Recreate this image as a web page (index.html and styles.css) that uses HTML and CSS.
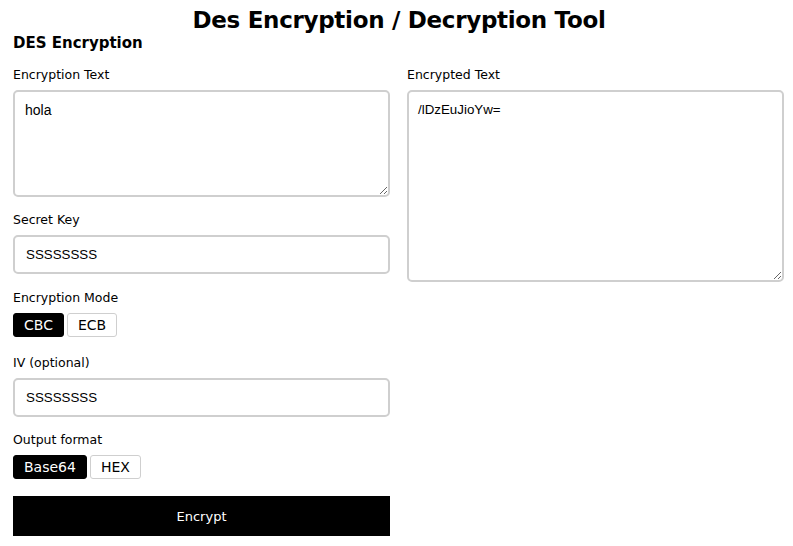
FILE: index.html
```html
<!DOCTYPE html>
<html>
<head>
<meta charset="utf-8">
<link rel="stylesheet" href="styles.css">
</head>
<body>
<h1 class="title">Des Encryption / Decryption Tool</h1>
<h2 class="subtitle">DES Encryption</h2>
<div class="grid">
  <div class="col">
    <div class="field first">
      <label class="label">Encryption Text</label>
      <textarea class="area area-small">hola</textarea>
    </div>
    <div class="field">
      <label class="label">Secret Key</label>
      <input class="input" type="text" value="SSSSSSSS">
    </div>
    <div class="field field-mode">
      <label class="label">Encryption Mode</label>
      <div class="toggles">
        <button class="tog active">CBC</button>
        <button class="tog">ECB</button>
      </div>
    </div>
    <div class="field field-iv">
      <label class="label">IV (optional)</label>
      <input class="input" type="text" value="SSSSSSSS">
    </div>
    <div class="field">
      <label class="label">Output format</label>
      <div class="toggles">
        <button class="tog active">Base64</button>
        <button class="tog">HEX</button>
      </div>
    </div>
    <button class="submit">Encrypt</button>
  </div>
  <div class="col">
    <div class="field first">
      <label class="label">Encrypted Text</label>
      <textarea class="area area-large">/lDzEuJioYw=</textarea>
    </div>
  </div>
</div>
</body>
</html>
```
FILE: styles.css
```css
* { box-sizing: border-box; }
body {
  margin: 0;
  padding: 0 8px 0 13px;
  font-family: "DejaVu Sans", sans-serif;
  color: #000;
  background: #fff;
}
.title {
  margin: 0;
  padding-top: 6px;
  height: 33px;
  font-size: 23px;
  line-height: 28px;
  font-weight: bold;
  text-align: center;
  letter-spacing: -0.3px;
}
.subtitle {
  margin: 0;
  height: 20px;
  font-size: 15px;
  line-height: 20px;
  font-weight: bold;
}
.grid {
  display: grid;
  grid-template-columns: 378px 378px;
  column-gap: 16px;
  margin-top: 13px;
}
.col { display: flex; flex-direction: column; }
.field { display: flex; flex-direction: column; margin-top: 14px; }
.field.first { margin-top: 0; }
.field-mode { margin-top: 15px; }
.field-iv { margin-top: 17px; }
.label {
  font-size: 12.5px;
  line-height: 15px;
  height: 16px;
  padding-top: 1px;
  margin-bottom: 8px;
}
.area, .input {
  font-family: "Liberation Sans", Arial, sans-serif;
  font-size: 13.33px;
  border: 2px solid #cfcfcf;
  border-radius: 5px;
  color: #000;
  width: 377px;
  outline: none;
}
.area {
  padding: 10px 10px;
  line-height: 16px;
}
.area-small { height: 107px; font-size: 14px; }
.area-large { height: 192px; padding: 10px 9px; }
.input { height: 39px; padding: 0 11px; }
.toggles { display: flex; gap: 3px; }
.tog {
  font-family: "DejaVu Sans", sans-serif;
  font-size: 14px;
  height: 24px;
  padding: 0 10px;
  background: #fff;
  color: #000;
  border: 1px solid #cfcfcf;
  border-radius: 3px;
}
.tog.active { background: #000; color: #fff; border-color: #000; }
.submit {
  margin-top: 17px;
  width: 377px;
  height: 40px;
  background: #000;
  color: #fff;
  border: none;
  font-family: "DejaVu Sans", sans-serif;
  font-size: 13px;
}
```
